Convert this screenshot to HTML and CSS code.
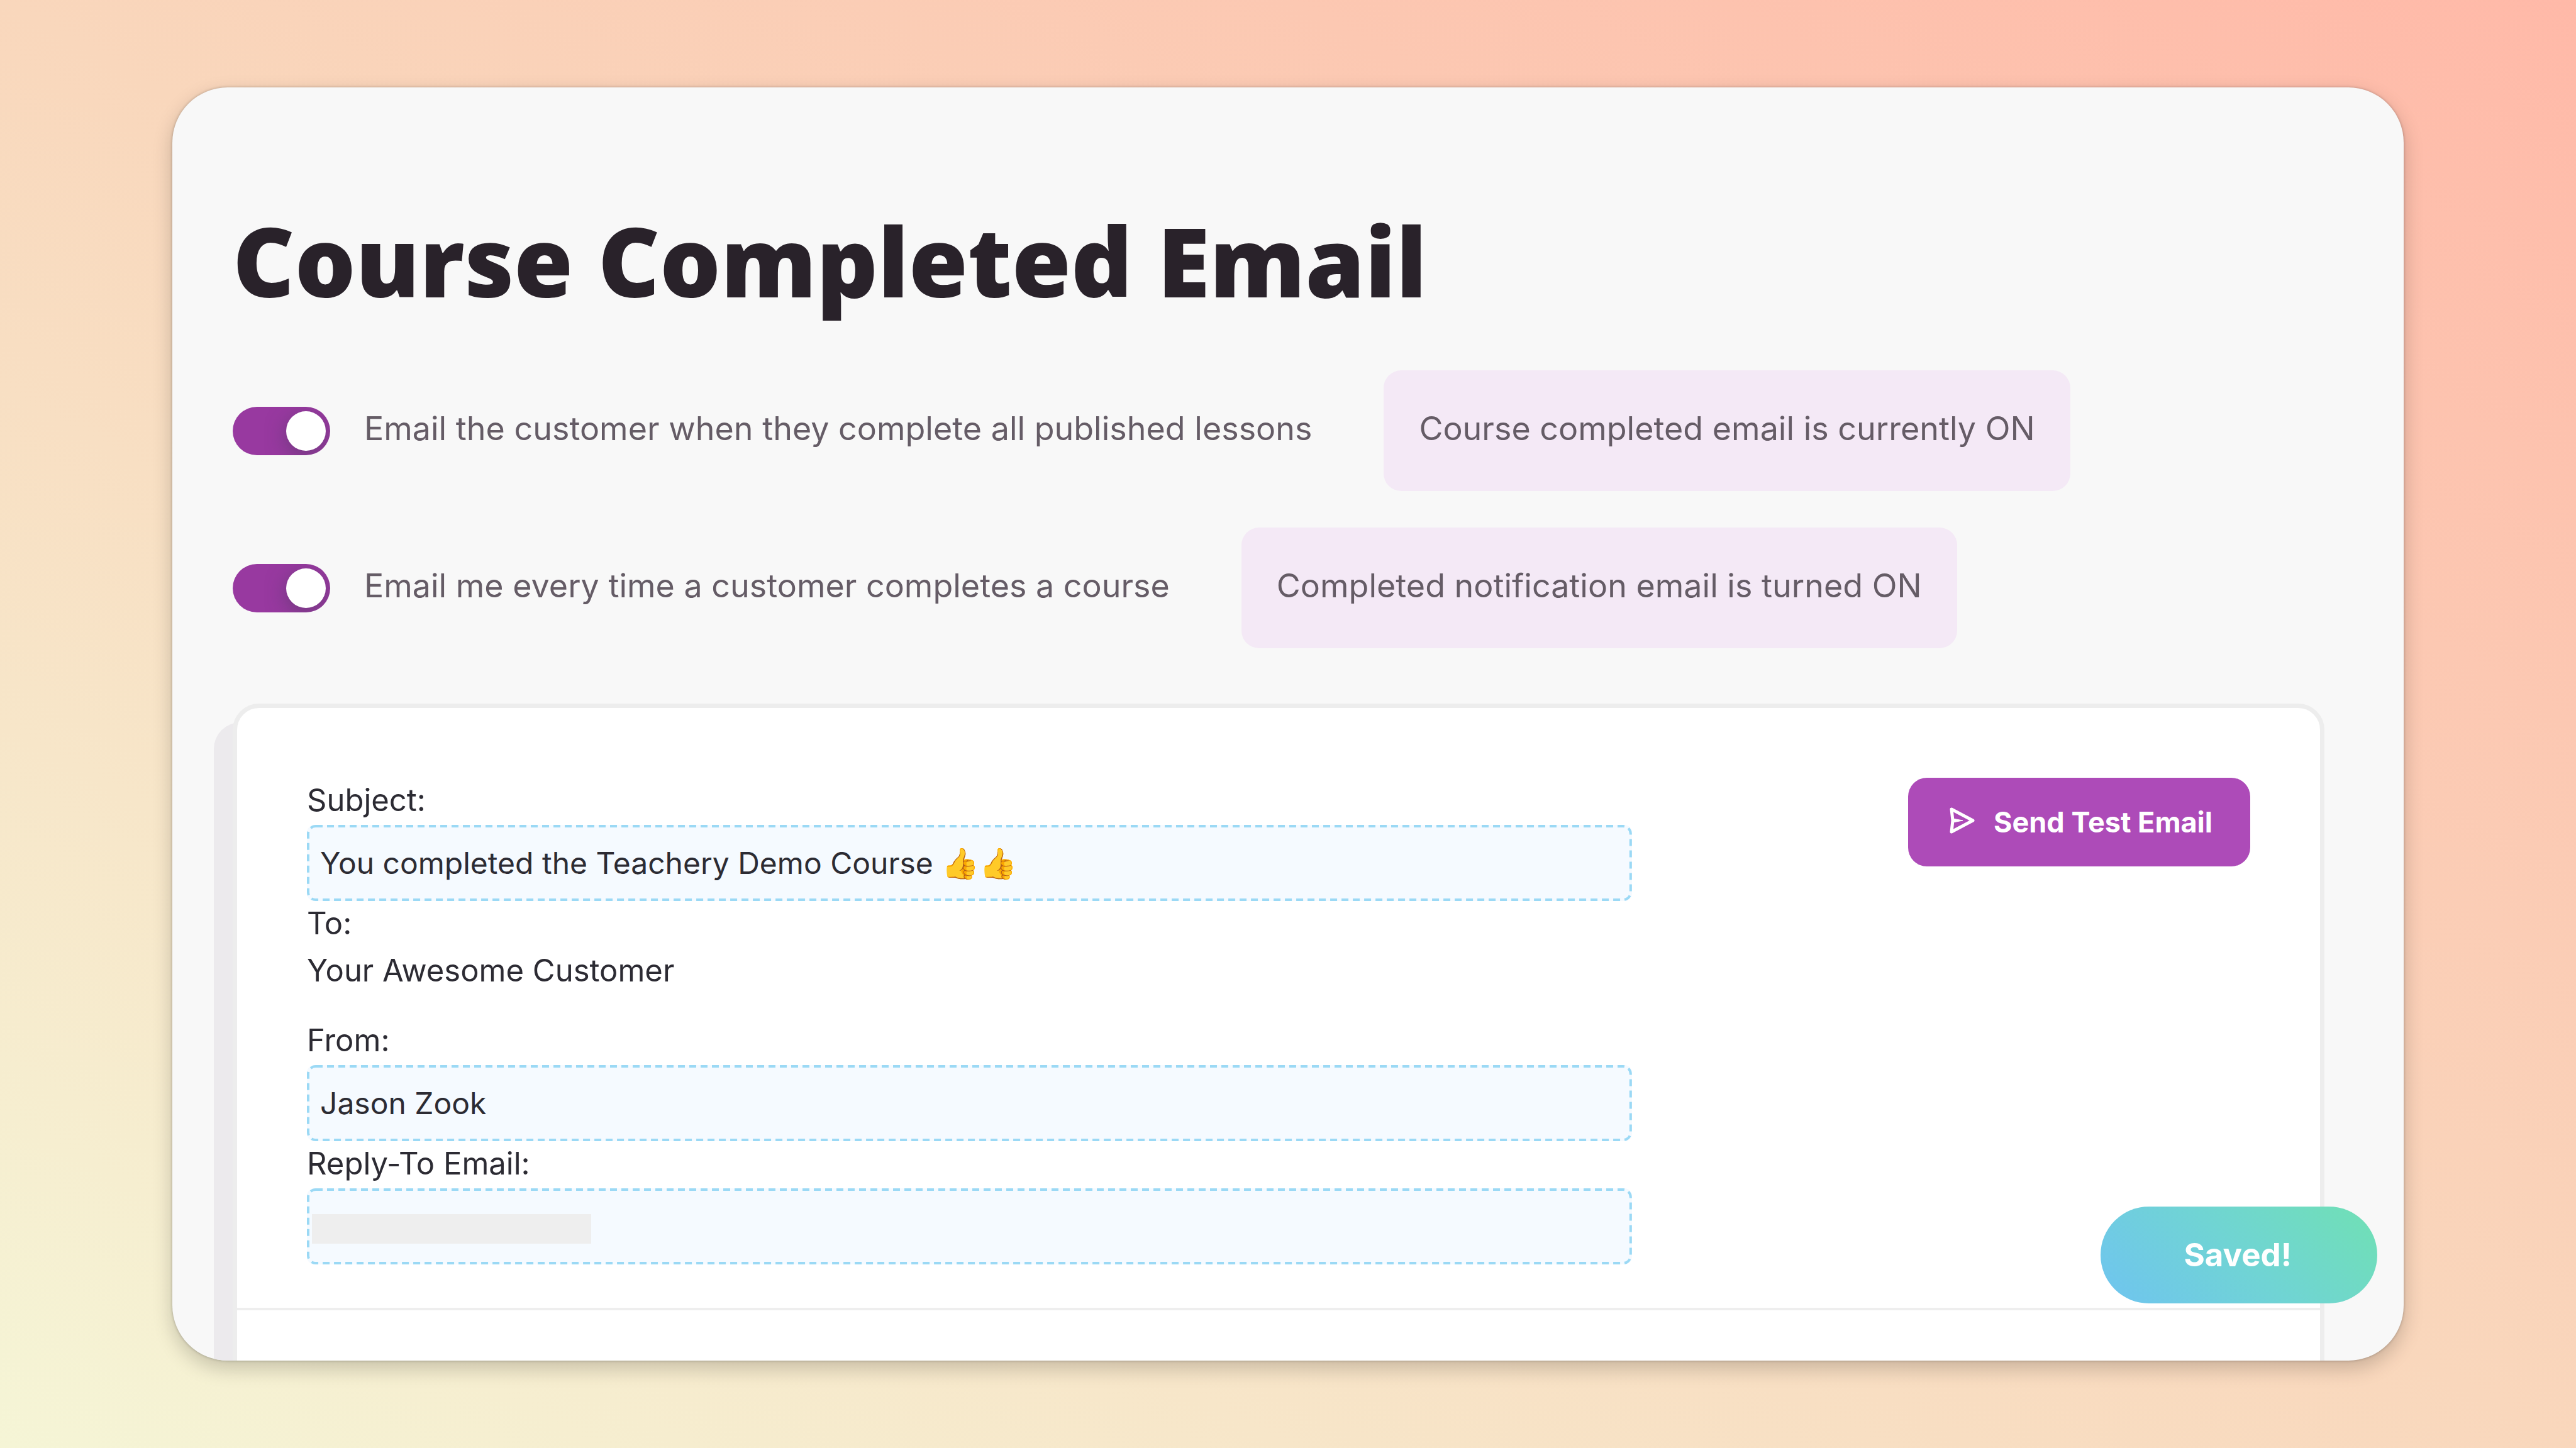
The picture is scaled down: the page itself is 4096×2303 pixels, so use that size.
FILE: index.html
```html
<!DOCTYPE html>
<html lang="en">
<head>
    <meta charset="UTF-8">
    <meta name="viewport" content="width=device-width, initial-scale=1.0">
    <title>Course Completed Email</title>
    <link rel="stylesheet" href="styles.css">
</head>
<body>
    <main class="panel">
        <h1>Course Completed Email</h1>

        <div class="settings">
            <div class="setting">
                <input type="checkbox" class="toggle" id="customer-email" checked>
                <label for="customer-email">Email the customer when they complete all published lessons</label>
                <p class="state">Course completed email is currently ON</p>
            </div>
            <div class="setting">
                <input type="checkbox" class="toggle" id="owner-email" checked>
                <label for="owner-email">Email me every time a customer completes a course</label>
                <p class="state">Completed notification email is turned ON</p>
            </div>
        </div>

        <form class="email-card">
            <div class="email-header">
                <div class="fields">
                    <label class="line" for="subject">Subject:</label>
                    <div class="field">
                        <input type="text" id="subject" value="You completed the Teachery Demo Course 👍👍">
                        <svg class="dashes" aria-hidden="true"><rect width="100%" height="100%" rx="12"/></svg>
                    </div>
                    <p class="line">To:</p>
                    <p class="line">Your Awesome Customer</p>
                    <label class="line spaced" for="from">From:</label>
                    <div class="field">
                        <input type="text" id="from" value="Jason Zook">
                        <svg class="dashes" aria-hidden="true"><rect width="100%" height="100%" rx="12"/></svg>
                    </div>
                    <label class="line" for="reply-to">Reply-To Email:</label>
                    <div class="field">
                        <input type="email" id="reply-to">
                        <span class="redacted"></span>
                        <svg class="dashes" aria-hidden="true"><rect width="100%" height="100%" rx="12"/></svg>
                    </div>
                </div>
                <button type="button" class="btn-send">
                    <svg class="send-icon" viewBox="0 0 40 42" aria-hidden="true">
                        <path d="M3 3 L37 21 L3 39 L5 21 Z"/>
                        <path class="fold" d="M5 18 L21 21 L5 24 Z"/>
                    </svg>
                    Send Test Email
                </button>
            </div>
            <div class="email-body"></div>
        </form>

        <div class="toast" role="status">Saved!</div>
    </main>
</body>
</html>
```
FILE: styles.css
```css
* {
    margin: 0;
    padding: 0;
    box-sizing: border-box;
}

body {
    font-family: Inter, "Open Sans", sans-serif;
    font-size: 52px;
    line-height: 62px;
    color: #655c66;
    background: linear-gradient(to top right, #f5f5d6 0%, #f9d7bc 50%, #ffb9a8 100%);
    height: 100vh;
    padding: 139px 274px;
    overflow: hidden;
}

.panel {
    position: relative;
    height: 100%;
    padding: 186px 126px 0 96px;
    background: #f8f8f8;
    border-radius: 88px;
    box-shadow: 0 0 4px rgba(0, 0, 0, 0.25), 0 12px 32px rgba(0, 0, 0, 0.2);
    overflow: hidden;
}

h1 {
    font-family: "Open Sans", sans-serif;
    font-size: 152px;
    font-weight: 800;
    line-height: 180px;
    color: #29222a;
    margin-bottom: 84px;
}

/* Toggles */
.settings {
    display: flex;
    flex-direction: column;
    gap: 58px;
    margin-bottom: 88px;
}

.setting {
    display: flex;
    align-items: center;
}

.setting label {
    margin: 0 114px 0 54px;
    padding-bottom: 6px;
}

.toggle {
    appearance: none;
    position: relative;
    width: 155px;
    height: 77px;
    border-radius: 40px;
    background: #9839a0;
    overflow: hidden;
    cursor: pointer;
}

.toggle::before {
    content: "";
    position: absolute;
    top: 7px;
    left: 7px;
    width: 63px;
    height: 63px;
    border-radius: 50%;
    background: #fff;
    box-shadow: 0 8px 32px rgba(70, 60, 90, 0.5);
}

.toggle:checked::before {
    left: auto;
    right: 7px;
}

.state {
    padding: 62px 56px 68px;
    background: #f4e9f6;
    border-radius: 28px;
}

/* Email preview */
.email-card {
    background: #fff;
    border: 7px solid #ededed;
    border-radius: 42px;
    box-shadow: -30px 30px 0 #eceaed;
    font-size: 49px;
    line-height: 71px;
    color: #2c2b33;
}

.email-header {
    display: grid;
    grid-template-columns: 15fr 7fr;
    align-items: start;
    padding: 111px 111px 69px;
    border-bottom: 4px solid #eeeeee;
}

.email-body {
    min-height: 200px;
}

.line {
    display: block;
    margin-bottom: 4px;
}

.spaced {
    margin-top: 40px;
}

.field {
    position: relative;
}

.field input {
    display: block;
    width: 100%;
    height: 121px;
    padding: 0 21px;
    border: none;
    border-radius: 12px;
    background: #f5faff;
    color: inherit;
    font-family: inherit;
    font-size: 48px;
}

.dashes {
    position: absolute;
    top: 2px;
    left: 2px;
    width: calc(100% - 4px);
    height: calc(100% - 4px);
    overflow: visible;
    pointer-events: none;
    fill: none;
    stroke: #9bd9f5;
    stroke-width: 4;
    stroke-dasharray: 11 7;
}

.redacted {
    position: absolute;
    top: 41px;
    left: 8px;
    width: 444px;
    height: 47px;
    background: #eeeeee;
}

.btn-send {
    justify-self: end;
    display: flex;
    align-items: center;
    gap: 30px;
    height: 141px;
    padding: 0 60px 0 66px;
    border: none;
    border-radius: 30px;
    background: #ad4bb8;
    color: #fff;
    font-family: inherit;
    font-size: 45px;
    font-weight: 700;
    cursor: pointer;
}

.send-icon {
    width: 40px;
    height: 42px;
    margin-bottom: 6px;
    fill: none;
    stroke: #fff;
    stroke-width: 5;
    stroke-linecap: round;
    stroke-linejoin: round;
}

.send-icon .fold {
    fill: #fff;
    stroke-width: 1;
}

.toast {
    position: absolute;
    right: 42px;
    bottom: 91px;
    padding: 46px 136px 46px 132px;
    border-radius: 77px;
    background: linear-gradient(45deg, #6fc4f0, #70d4d4 50%, #70e0b4);
    color: #fff;
    font-size: 51px;
    font-weight: 700;
}
```
